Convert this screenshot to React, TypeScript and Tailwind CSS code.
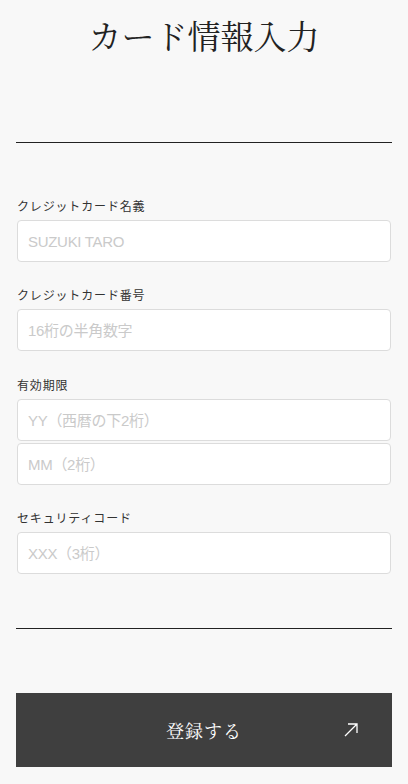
export default function App() {
  const labelCls = "block text-[12px] tracking-[0.07em] text-[#333] mb-[5px] leading-[16px]";
  const inputCls =
    "block w-full h-[42px] rounded-[4px] border border-[#dcdcdc] bg-white px-[10px] text-[15px] tracking-[-0.02em] text-[#333] placeholder:text-[#cacaca] outline-none";

  return (
    <div className="min-h-[784px] bg-[#f8f8f8] px-4 pt-[12px] pb-[18px] font-['Liberation_Sans','Noto_Sans_CJK_JP',sans-serif]">
      <h1 className="text-center text-[33px] leading-[46px] text-[#222] font-['Noto_Serif_CJK_JP','Liberation_Serif','Noto_Sans_CJK_JP',serif]">
        カード情報入力
      </h1>
      <div className="mt-[84px] border-t border-[#222]" />

      <form className="pt-[56px]">
        <div className="px-px">
          <label className={labelCls}>クレジットカード名義</label>
          <input className={inputCls} placeholder="SUZUKI TARO" />
        </div>
        <div className="mt-[26px] px-px">
          <label className={labelCls}>クレジットカード番号</label>
          <input className={inputCls} placeholder="16桁の半角数字" />
        </div>
        <div className="mt-[27px] px-px">
          <label className={labelCls}>有効期限</label>
          <div className="flex flex-col gap-[2px]">
            <input className={inputCls} placeholder="YY（西暦の下2桁）" />
            <input className={inputCls} placeholder="MM（2桁）" />
          </div>
        </div>
        <div className="mt-[26px] px-px">
          <label className={labelCls}>セキュリティコード</label>
          <input className={inputCls} placeholder="XXX（3桁）" />
        </div>
      </form>

      <div className="mt-[54px] border-t border-[#222]" />

      <button className="relative mt-[64px] flex h-[74px] w-full items-center justify-center bg-[#3f3f3f] text-white">
        <span className="text-[18px] tracking-[0.05em] font-['Noto_Serif_CJK_JP','Liberation_Serif','Noto_Sans_CJK_JP',serif]">
          登録する
        </span>
        <svg
          className="absolute right-[34px] top-1/2 -translate-y-1/2"
          width="14"
          height="14"
          viewBox="0 0 14 14"
          fill="none"
          stroke="white"
          strokeWidth="1.3"
        >
          <path d="M1 13 L13 1 M4 1 H13 V10" />
        </svg>
      </button>
    </div>
  );
}
